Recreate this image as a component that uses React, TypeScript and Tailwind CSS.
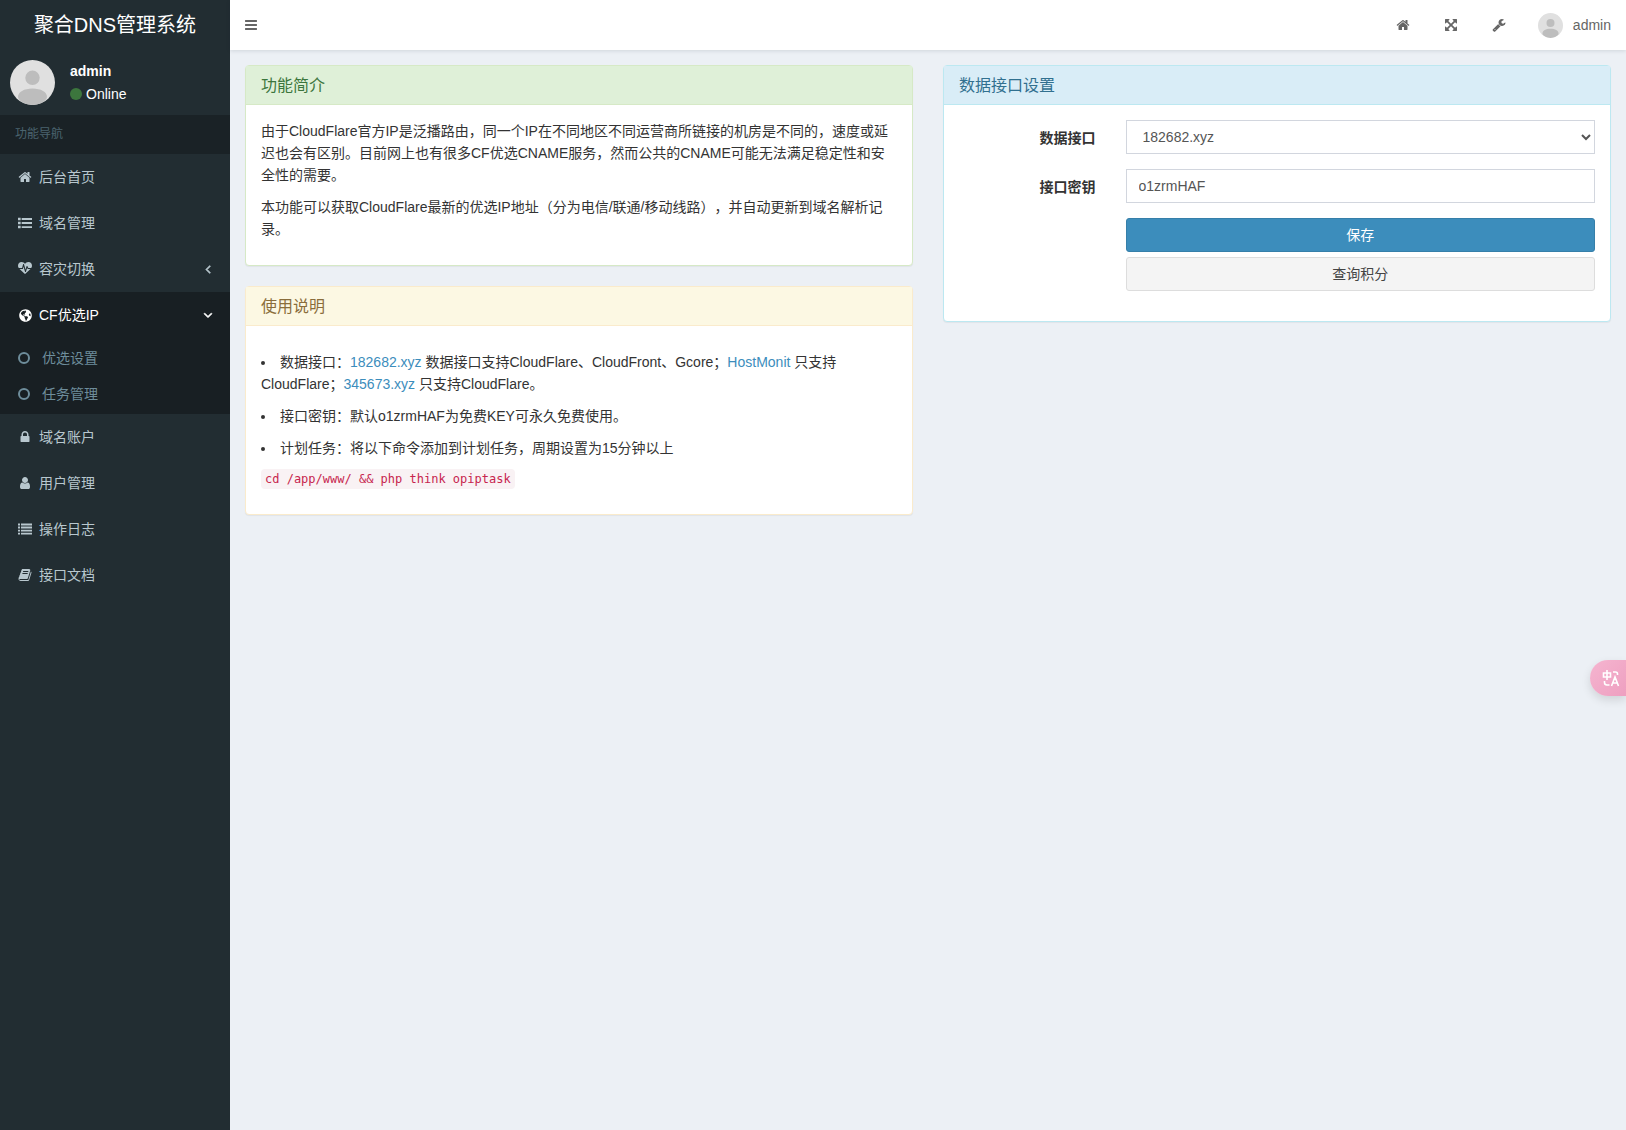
import type { ReactNode } from "react";
import { FaGlobeAmericas } from "react-icons/fa";

const paths = {
  home: "M1472 992v480q0 26-19 45t-45 19h-384v-384h-256v384h-384q-26 0-45-19t-19-45v-480q0-1 .5-3t.5-3l575-474 575 474q1 2 1 6zm223-69l-62 74q-8 9-21 11h-3q-13 0-21-7l-692-577-692 577q-12 8-24 7-13-2-21-11l-62-74q-8-10-7-23.5t11-21.5l719-599q32-26 76-26t76 26l244 204v-195q0-14 9-23t23-9h192q14 0 23 9t9 23v408l219 182q10 8 11 21.5t-7 23.5z",
  heartbeat:
    "M1280 896h305q-5 6-10 10.5t-9 7.5l-3 4-623 600q-18 18-44 18t-44-18l-624-602q-5-2-21-20h369q22 0 39.5-13.5t22.5-34.5l70-281 190 667q6 20 23 33t39 13q21 0 38-13t23-33l146-485 56 112q18 35 57 35zm512-428q0 145-103 300h-369l-111-221q-8-17-25.5-27t-36.5-8q-45 5-56 46l-129 430-196-686q-6-20-23.5-33t-39.5-13-39 13.5-22 34.5l-116 464h-423q-103-155-103-300 0-220 127-344t351-124q62 0 126.5 21.5t120 58 95.5 68.5 76 68q36-36 76-68t95.5-68.5 120-58 126.5-21.5q224 0 351 124t127 344z",
  lock: "M640 768h512v-192q0-106-75-181t-181-75-181 75-75 181v192zm832 96v576q0 40-28 68t-68 28h-960q-40 0-68-28t-28-68v-576q0-40 28-68t68-28h32v-192q0-184 132-316t316-132 316 132 132 316v192h32q40 0 68 28t28 68z",
  user: "M1536 1399q0 109-62.5 187t-150.5 78h-854q-88 0-150.5-78t-62.5-187q0-85 8.5-160.5t31.5-152 58.5-131 94-89 134.5-34.5q131 128 313 128t313-128q76 0 134.5 34.5t94 89 58.5 131 31.5 152 8.5 160.5zm-256-887q0 159-112.5 271.5t-271.5 112.5-271.5-112.5-112.5-271.5 112.5-271.5 271.5-112.5 271.5 112.5 112.5 271.5z",
  book: "M1703 478q40 57 18 129l-275 906q-19 64-76.5 107.5t-122.5 43.5h-923q-77 0-148.5-53.5t-99.5-131.5q-24-67-2-127 0-4 3-27t4-37q1-8-3-21.5t-3-19.5q2-11 8-21t16.5-23.5 16.5-23.5q23-38 45-91.5t30-91.5q3-10 .5-30t-.5-28q3-11 17-28t17-23q21-36 42-92t25-90q1-9-2.5-32t.5-28q4-13 22-30.5t22-22.5q19-26 42.5-84.5t27.5-96.5q1-8-3-25.5t-2-26.5q2-8 9-18t18-23 17-21q8-12 16.5-30.5t15-35 16-36 19.5-32 26.5-23.5 36-11.5 47.5 5.5l-1 3q38-9 51-9h761q74 0 114 56t18 130l-274 906q-36 119-71.5 153.5t-128.5 34.5h-869q-27 0-38 15-11 16-1 43 24 70 144 70h923q29 0 56-15.5t35-41.5l300-987q7-22 5-57 38 15 59 43zm-1064 2q-4 13 2 22.5t20 9.5h608q13 0 25.5-9.5t16.5-22.5l21-64q4-13-2-22.5t-20-9.5h-608q-13 0-25.5 9.5t-16.5 22.5zm-83 256q-4 13 2 22.5t20 9.5h608q13 0 25.5-9.5t16.5-22.5l21-64q4-13-2-22.5t-20-9.5h-608q-13 0-25.5 9.5t-16.5 22.5z",
  listUl:
    "M0 210h340v320h-340zM470 256h1322v240h-1322zM0 736h340v320h-340zM470 776h1322v240h-1322zM0 1260h340v320h-340zM470 1296h1322v240h-1322z",
  list: "M0 200h256v240h-256zM384 200h1408v240h-1408zM0 590h256v240h-256zM384 590h1408v240h-1408zM0 980h256v240h-256zM384 980h1408v240h-1408zM0 1370h256v240h-256zM384 1370h1408v240h-1408z",
  bars: "M1664 1344v128q0 26-19 45t-45 19h-1408q-26 0-45-19t-19-45v-128q0-26 19-45t45-19h1408q26 0 45 19t19 45zm0-512v128q0 26-19 45t-45 19h-1408q-26 0-45-19t-19-45v-128q0-26 19-45t45-19h1408q26 0 45 19t19 45zm0-512v128q0 26-19 45t-45 19h-1408q-26 0-45-19t-19-45v-128q0-26 19-45t45-19h1408q26 0 45 19t19 45z",
  angleLeft:
    "M1203 544q0 13-10 23l-393 393 393 393q10 10 10 23t-10 23l-50 50q-10 10-23 10t-23-10l-466-466q-10-10-10-23t10-23l466-466q10-10 23-10t23 10l50 50q10 10 10 23z",
  angleDown:
    "M1395 736q0 13-10 23l-466 466q-10 10-23 10t-23-10l-466-466q-10-10-10-23t10-23l50-50q10-10 23-10t23 10l393 393 393-393q10-10 23-10t23 10l50 50q10 10 10 23z",
  arrows:
    "M1411 541l-355 355 355 355 144-144q29-31 70-14 39 17 39 59v448q0 26-19 45t-45 19h-448q-42 0-59-40-17-39 14-69l144-144-355-355-355 355 144 144q31 30 14 69-17 40-59 40h-448q-26 0-45-19t-19-45v-448q0-42 40-59 39-17 69 14l144 144 355-355-355-355-144 144q-19 19-45 19-12 0-24-5-40-17-40-59v-448q0-26 19-45t45-19h448q42 0 59 40 17 39-14 69l-144 144 355 355 355-355-144-144q-31-30-14-69 17-40 59-40h448q26 0 45 19t19 45v448q0 42-39 59-13 5-25 5-26 0-45-19z",
  wrench:
    "M448 1472q0-26-19-45t-45-19-45 19-19 45 19 45 45 19 45-19 19-45zm644-420l-682 682q-37 37-90 37-52 0-91-37l-106-108q-38-36-38-90 0-53 38-91l681-681q39 98 114.5 173.5t173.5 114.5zm634-435q0 39-23 106-47 134-164.5 217.5t-258.5 83.5q-185 0-316.5-131.5t-131.5-316.5 131.5-316.5 316.5-131.5q58 0 121.5 16.5t107.5 46.5q16 11 16 28t-16 28l-293 169v224l193 107q5-3 79-48.5t135.5-81 70.5-35.5q15 0 23.5 10t8.5 25z",
};

type IconName = keyof typeof paths;

function Icon({ name, className = "size-[14px]" }: { name: IconName; className?: string }) {
  return (
    <svg viewBox="0 0 1792 1792" fill="currentColor" aria-hidden="true" className={className}>
      <path d={paths[name]} />
    </svg>
  );
}

function Avatar({ className }: { className: string }) {
  return (
    <svg viewBox="0 0 45 45" aria-hidden="true" className={`shrink-0 rounded-full ${className}`}>
      <rect width="45" height="45" fill="#e0e0e0" />
      <circle cx="22.5" cy="17.8" r="7.2" fill="#bdbdbd" />
      <path d="M8 37c0-5 6-8.500 14.500-8.500S37 32 37 37c0 3-6 8-14.500 8S8 40 8 37z" fill="#bdbdbd" />
    </svg>
  );
}

type MenuItem = {
  label: string;
  icon: IconName | "globe";
  arrow?: boolean;
  children?: string[];
};

const menu: MenuItem[] = [
  { label: "后台首页", icon: "home" },
  { label: "域名管理", icon: "listUl" },
  { label: "容灾切换", icon: "heartbeat", arrow: true },
  { label: "CF优选IP", icon: "globe", children: ["优选设置", "任务管理"] },
  { label: "域名账户", icon: "lock" },
  { label: "用户管理", icon: "user" },
  { label: "操作日志", icon: "list" },
  { label: "接口文档", icon: "book" },
];

function Sidebar() {
  const arrowClass = "ml-auto size-[14px] stroke-current stroke-[90]";
  return (
    <aside className="w-[230px] shrink-0 bg-[#222d32] text-white">
      <a href="#" className="flex h-[50px] items-center justify-center text-xl">
        聚合DNS管理系统
      </a>

      <div className="flex h-[65px] items-center gap-[15px] px-[10px]">
        <Avatar className="size-[45px]" />
        <div>
          <p className="mb-px font-semibold">admin</p>
          <a href="#" className="flex items-center gap-1">
            <span className="size-3 rounded-full bg-[#3c763d]" />
            Online
          </a>
        </div>
      </div>

      <nav>
        <h2 className="bg-[#1a2226] px-[15px] py-2 text-xs leading-[23px] text-[#4b646f]">功能导航</h2>
        <ul>
          {menu.map((item) => (
            <li key={item.label} className={item.children ? "bg-[#181f23] text-white" : "text-[#b8c7ce]"}>
              <a href="#" className="flex h-[46px] items-center gap-1 px-[15px]">
                <span className="flex w-5 justify-center">
                  {item.icon === "globe" ? (
                    <FaGlobeAmericas className="size-[13px]" />
                  ) : (
                    <Icon name={item.icon} />
                  )}
                </span>
                {item.label}
                {item.arrow && <Icon name="angleLeft" className={arrowClass} />}
                {item.children && <Icon name="angleDown" className={arrowClass} />}
              </a>
              {item.children && (
                <ul className="py-0.5 text-[#6e8d9b]">
                  {item.children.map((child) => (
                    <li key={child}>
                      <a href="#" className="flex h-9 items-center gap-3 pl-[18px]">
                        <span className="size-3 rounded-full border-2 border-current" />
                        {child}
                      </a>
                    </li>
                  ))}
                </ul>
              )}
            </li>
          ))}
        </ul>
      </nav>
    </aside>
  );
}

function Navbar() {
  return (
    <header className="flex h-[50px] items-center justify-between bg-white text-[#666] shadow-[0_1px_4px_rgba(0,21,41,0.12)]">
      <button type="button" aria-label="切换导航" className="px-[14px]">
        <Icon name="bars" />
      </button>
      <div className="flex items-center">
        <a href="#" aria-label="首页" className="flex w-12 justify-center">
          <Icon name="home" />
        </a>
        <a href="#" aria-label="全屏" className="flex w-12 justify-center">
          <Icon name="arrows" />
        </a>
        <a href="#" aria-label="设置" className="flex w-12 justify-center">
          <Icon name="wrench" />
        </a>
        <a href="#" className="flex items-center gap-[10px] px-[15px]">
          <Avatar className="size-[25px]" />
          admin
        </a>
      </div>
    </header>
  );
}

const tones = {
  success: { border: "border-[#d6e9c6]", heading: "bg-[#dff0d8] text-[#3c763d]" },
  warning: { border: "border-[#faebcc]", heading: "bg-[#fcf8e3] text-[#8a6d3b]" },
  info: { border: "border-[#bce8f1]", heading: "bg-[#d9edf7] text-[#31708f]" },
};

function Panel({ tone, title, children }: { tone: keyof typeof tones; title: string; children: ReactNode }) {
  const { border, heading } = tones[tone];
  return (
    <section className={`mb-5 rounded-sm border bg-white shadow-[0_1px_1px_rgba(0,0,0,0.05)] ${border}`}>
      <h3 className={`border-b px-[15px] pt-[11px] pb-[9px] text-base leading-[18px] ${border} ${heading}`}>
        {title}
      </h3>
      <div className="p-[15px]">{children}</div>
    </section>
  );
}

function Link({ children }: { children: ReactNode }) {
  return (
    <a href="#" className="text-[#3c8dbc]">
      {children}
    </a>
  );
}

function SettingsForm() {
  const control = "block h-[34px] w-full border border-[#d2d6de] bg-white px-3 text-[#555]";
  return (
    <form className="-mx-[15px] grid grid-cols-4 gap-y-[15px] pb-[15px]">
      <label htmlFor="source" className="px-[15px] pt-[7px] text-right font-bold">
        数据接口
      </label>
      <div className="col-span-3 px-[15px]">
        <select id="source" className={control}>
          <option>182682.xyz</option>
          <option>HostMonit</option>
          <option>345673.xyz</option>
        </select>
      </div>

      <label htmlFor="key" className="px-[15px] pt-[7px] text-right font-bold">
        接口密钥
      </label>
      <div className="col-span-3 px-[15px]">
        <input id="key" type="text" defaultValue="o1zrmHAF" className={control} />
      </div>

      <div className="col-span-3 col-start-2 flex flex-col gap-[5px] px-[15px]">
        <button type="submit" className="h-[34px] rounded-[3px] border border-[#367fa9] bg-[#3c8dbc] text-white">
          保存
        </button>
        <button type="button" className="h-[34px] rounded-[3px] border border-[#ddd] bg-[#f4f4f4] text-[#444]">
          查询积分
        </button>
      </div>
    </form>
  );
}

export default function App() {
  return (
    <div className="flex min-h-screen bg-[#ecf0f5] font-['Liberation_Sans','Noto_Sans_CJK_SC',sans-serif] text-[14px] leading-[22px] text-[#333] [text-spacing-trim:space-all]">
      <Sidebar />

      <div className="min-w-0 flex-1">
        <Navbar />
        <main className="grid grid-cols-2 items-start gap-[30px] p-[15px]">
          <div>
            <Panel tone="success" title="功能简介">
              <p className="mb-[10px]">
                由于CloudFlare官方IP是泛播路由，同一个IP在不同地区不同运营商所链接的机房是不同的，速度或延迟也会有区别。目前网上也有很多CF优选CNAME服务，然而公共的CNAME可能无法满足稳定性和安全性的需要。
              </p>
              <p className="mb-[10px]">
                本功能可以获取CloudFlare最新的优选IP地址（分为电信/联通/移动线路），并自动更新到域名解析记录。
              </p>
            </Panel>

            <Panel tone="warning" title="使用说明">
              <ul className="my-[10px] list-inside list-disc space-y-[10px]">
                <li>
                  数据接口：<Link>182682.xyz</Link> 数据接口支持CloudFlare、CloudFront、Gcore；
                  <Link>HostMonit</Link> 只支持CloudFlare；<Link>345673.xyz</Link> 只支持CloudFlare。
                </li>
                <li>接口密钥：默认o1zrmHAF为免费KEY可永久免费使用。</li>
                <li>计划任务：将以下命令添加到计划任务，周期设置为15分钟以上</li>
              </ul>
              <code className="mb-[10px] block w-fit rounded bg-[#f9f2f4] px-1 font-['DejaVu_Sans_Mono',monospace] text-xs leading-5 text-[#c7254e]">
                cd /app/www/ &amp;&amp; php think opiptask
              </code>
            </Panel>
          </div>

          <Panel tone="info" title="数据接口设置">
            <SettingsForm />
          </Panel>
        </main>
      </div>

      <button
        type="button"
        aria-label="翻译"
        className="fixed top-[660px] right-0 flex h-9 w-9 items-center justify-end rounded-l-full bg-linear-to-br from-[#f5b5d0] to-[#ee9fc0] pr-[6px] shadow-[0_4px_10px_rgba(0,0,0,0.12)]"
      >
        <svg viewBox="0 0 18 18" fill="none" stroke="white" strokeWidth="1.600" aria-hidden="true" className="size-[18px]">
          <path d="M1.500 4h7v4h-7zM5 1v10M11 3h2.500q2 0 2 2v1M2.500 12v1.500q0 2.500 2.500 2.500h2.500M9.500 17l3.500-9 3.500 9M10.500 14h5" />
        </svg>
      </button>
    </div>
  );
}
